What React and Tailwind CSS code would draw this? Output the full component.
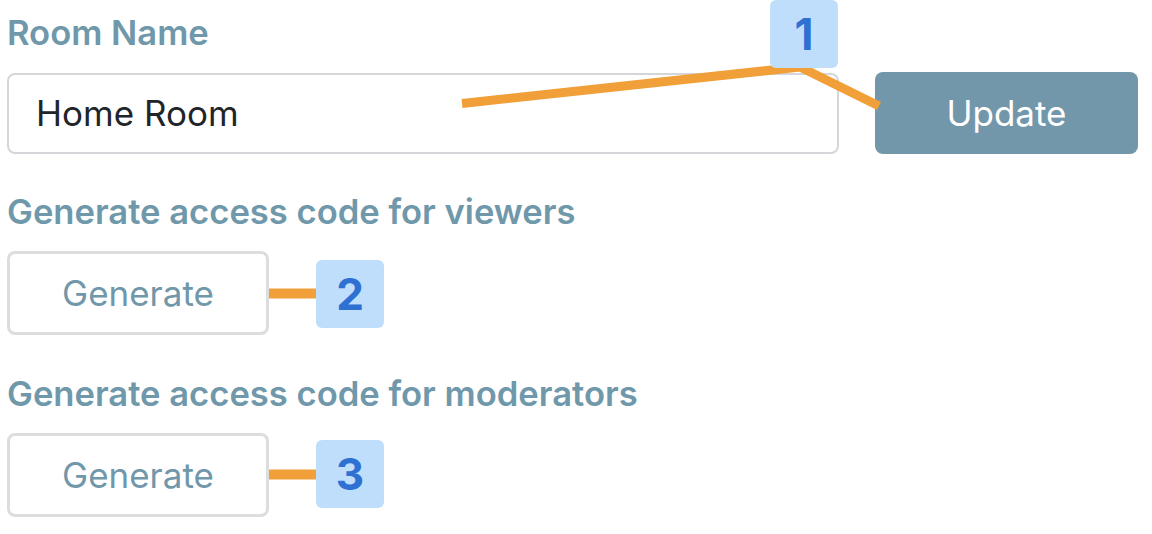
export default function App() {
  return (
    <div className="relative w-[1152px] h-[534px] bg-white overflow-hidden font-['Inter',sans-serif]">
      {/* Form */}
      <div className="flex flex-col pl-[7px] pt-[12px]">
        <label className="text-[34.6px] leading-[40px] font-semibold text-[#7098ab]">Room Name</label>
        <div className="mt-[20px] flex items-center gap-[36px]">
          <div className="w-[832px] h-[81px] flex items-center pl-[27px] border-2 border-[#d4d6da] rounded-lg text-[35px] text-[#212529]">
            Home Room
          </div>
          <button className="w-[263px] h-[82px] rounded-lg bg-[#7297aa] text-white text-[35px]">Update</button>
        </div>

        <label className="mt-[37px] text-[34.6px] leading-[40px] font-semibold text-[#7098ab]">
          Generate access code for viewers
        </label>
        <div className="mt-[20px]">
          <button className="w-[262px] h-[84px] rounded-lg border-[3px] border-[#dddddd] bg-white text-[35px] text-[#7097aa]">
            Generate
          </button>
        </div>

        <label className="mt-[38px] text-[34.6px] leading-[40px] font-semibold text-[#7098ab]">
          Generate access code for moderators
        </label>
        <div className="mt-[20px]">
          <button className="w-[262px] h-[84px] rounded-lg border-[3px] border-[#dddddd] bg-white text-[35px] text-[#7097aa]">
            Generate
          </button>
        </div>
      </div>

      {/* Annotation lines */}
      <svg className="absolute inset-0 pointer-events-none" width="1152" height="534" viewBox="0 0 1152 534">
        <polyline points="462,103.5 800,67 879,106" fill="none" stroke="#f19f38" strokeWidth="9" strokeLinejoin="bevel" />
        <line x1="269" y1="293.5" x2="317" y2="293.5" stroke="#f19f38" strokeWidth="10" />
        <line x1="269" y1="474.5" x2="317" y2="474.5" stroke="#f19f38" strokeWidth="10" />
      </svg>

      {/* Badges */}
      <div className="absolute left-[770px] top-0 w-[68px] h-[68px] rounded-md bg-[#bfdefb] flex items-center justify-center text-[44px] font-bold text-[#2f70d3]">
        1
      </div>
      <div className="absolute left-[316px] top-[260px] w-[68px] h-[68px] rounded-md bg-[#bfdefb] flex items-center justify-center text-[44px] font-bold text-[#2f70d3]">
        2
      </div>
      <div className="absolute left-[316px] top-[440px] w-[68px] h-[68px] rounded-md bg-[#bfdefb] flex items-center justify-center text-[44px] font-bold text-[#2f70d3]">
        3
      </div>
    </div>
  );
}
